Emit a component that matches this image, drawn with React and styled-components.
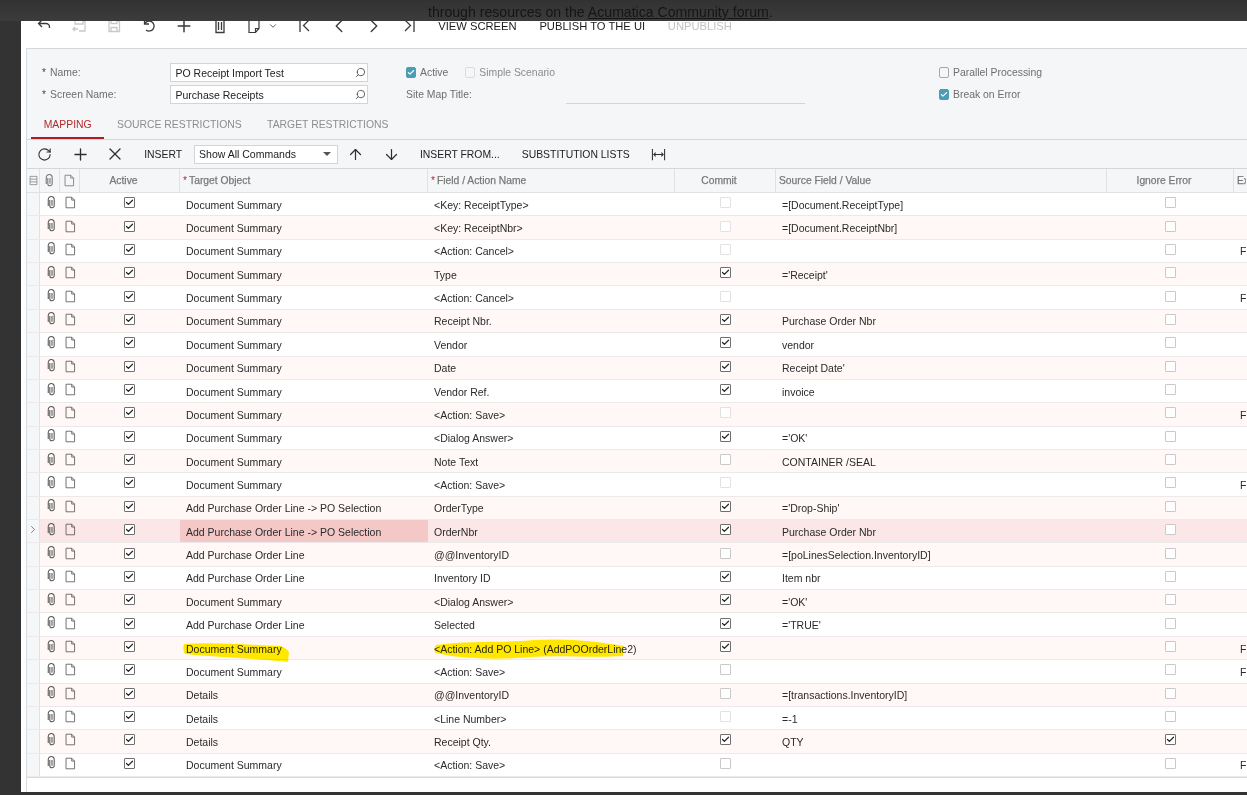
import styled, { createGlobalStyle } from "styled-components";
import {
  Plus,
  X,
  RotateCw,
  ArrowUp,
  ArrowDown,
  ChevronLeft,
  ChevronRight,
  ChevronDown,
  Search,
  Check,
} from "lucide-react";

const GlobalStyle = createGlobalStyle`
  html, body {
    margin: 0;
    padding: 0;
    height: 795px;
    overflow: hidden;
    background: #333333;
    font-family: "Liberation Sans", Arial, sans-serif;
    color: #2b2b2b;
  }
  * { box-sizing: border-box; }
`;

const Page = styled.div`
  width: 1247px;
  height: 795px;
  display: flex;
  flex-direction: column;
  overflow: hidden;
  background: #333333;
`;
const Behind = styled.div`
  height: 21px;
  flex: none;
  overflow: hidden;
  padding-left: 428px;
  padding-top: 4px;
  font-size: 14.1px;
  line-height: 17px;
  color: #151515;
  background: linear-gradient(#323232, #3c3c3c);
  a {
    color: #151515;
    text-decoration: underline;
  }
`;
const Window = styled.div`
  margin-left: 21px;
  height: 771px;
  flex: none;
  background: #ffffff;
  padding-left: 5px;
  overflow: hidden;
`;

const Toolbar = styled.div`
  height: 27px;
  display: flex;
  align-items: flex-start;
  overflow: hidden;
`;
const ToolIcon = styled.div`
  width: ${(p) => p.$w || 35.2}px;
  height: 9px;
  flex: none;
  display: flex;
  align-items: center;
  justify-content: center;
  gap: 6px;
  color: ${(p) => (p.$off ? "#c9c9c9" : "#3a3a3a")};
`;
const ToolText = styled.div`
  height: 11px;
  line-height: 11px;
  padding: 0 11.4px;
  font-size: 11.2px;
  white-space: nowrap;
  color: ${(p) => (p.$off ? "#c4c4c4" : "#1c1c1c")};
`;

const Main = styled.div`
  border-left: 1px solid #d9dcdf;
  height: 744px;
  overflow: hidden;
`;
const Summary = styled.div`
  height: 91px;
  background: #f4f6f8;
  border-top: 1px solid #d5d8da;
`;
const Form = styled.div`
  display: grid;
  grid-template-columns: 128px 198px 38px 533px 1fr;
  grid-template-rows: 19px 19px;
  row-gap: 3px;
  padding: 14px 0 0 15px;
  height: 65px;
  font-size: 10.4px;
  color: #6e6e6e;
  align-items: center;
`;
const Label = styled.div`
  display: flex;
  align-items: center;
  gap: 3px;
  padding-bottom: 1px;
  &::before {
    content: "*";
    color: #444;
    font-size: 10px;
    width: 5px;
  }
`;
const Lookup = styled.div`
  height: 19px;
  background: #ffffff;
  border: 1px solid #d2d5d8;
  display: flex;
  align-items: center;
  justify-content: space-between;
  padding: 0 1px 0 4.500px;
  font-size: 10.5px;
  color: #222;
`;
const CheckRow = styled.div`
  display: flex;
  align-items: center;
  gap: 4px;
  color: ${(p) => (p.$dim ? "#8c8c8c" : "#6e6e6e")};
`;
const MidRow = styled.div`
  display: flex;
  align-items: center;
  gap: 17px;
`;
const SiteRow = styled.div`
  display: flex;
  align-items: center;
  span {
    width: 160px;
    padding-bottom: 1px;
  }
  div {
    width: 239px;
    height: 19px;
    border-bottom: 1px solid #d2d5d8;
  }
`;
const FormBox = styled.span`
  width: 10px;
  height: 11px;
  border-radius: 2px;
  flex: none;
  display: flex;
  align-items: center;
  justify-content: center;
  color: #fff;
  background: ${(p) => (p.$on ? "#4b9db3" : "transparent")};
  border: 1px solid ${(p) => (p.$on ? "#4b9db3" : p.$dim ? "#dcdcdc" : "#a8a8a8")};
`;
const Tabs = styled.div`
  display: flex;
  height: 25px;
  padding-left: 4px;
`;
const Tab = styled.div`
  padding: 0 12.700px;
  height: 25px;
  line-height: 22px;
  font-size: 10.4px;
  color: ${(p) => (p.$on ? "#b3282d" : "#8d8d8d")};
  border-bottom: 2px solid ${(p) => (p.$on ? "#b01c22" : "transparent")};
`;

const GridBar = styled.div`
  height: 30px;
  background: #f4f6f8;
  border-top: 1px solid #d5d8da;
  border-bottom: 1px solid #d5d8da;
  display: flex;
  align-items: center;
`;
const BarIcon = styled.div`
  width: 35.4px;
  flex: none;
  display: flex;
  justify-content: center;
  color: #2e2e2e;
`;
const BarText = styled.div`
  padding: 0 11px;
  font-size: 10.4px;
  white-space: nowrap;
  color: #222;
`;
const Select = styled.div`
  width: 144px;
  height: 19px;
  margin-left: 1px;
  background: #fff;
  border: 1px solid #d2d5d8;
  display: flex;
  align-items: center;
  justify-content: space-between;
  padding: 0 6px 0 4px;
  font-size: 10.5px;
  color: #222;
  &::after {
    content: "";
    border-left: 4px solid transparent;
    border-right: 4px solid transparent;
    border-top: 4px solid #555;
  }
`;

const cols = "13px 20px 20px 100px 248px 247px 101px 331px 127px 1fr";
const HeadRow = styled.div`
  display: grid;
  grid-template-columns: ${cols};
  height: 24px;
  background: #f4f6f8;
  border-bottom: 1px solid #dfe1e3;
`;
const HeadCell = styled.div`
  display: flex;
  align-items: center;
  justify-content: ${(p) => (p.$center ? "center" : "flex-start")};
  padding-left: ${(p) => (p.$center ? 0 : 3)}px;
  padding-right: ${(p) => (p.$shift ? 12 : 0)}px;
  border-right: 1px solid ${(p) => (p.$plain ? "transparent" : "#dfe1e3")};
  font-size: 10.3px;
  -webkit-text-stroke: 0.25px #808080;
  color: #747474;
  white-space: nowrap;
  overflow: hidden;
  i {
    font-style: normal;
    color: #c0272d;
    -webkit-text-stroke: 0;
    margin-right: 2px;
  }
`;
const GridBody = styled.div`
  position: relative;
  border-bottom: 1px solid #d8d8d8;
`;
const Row = styled.div`
  display: grid;
  grid-template-columns: ${cols};
  height: 23.36px;
  background: ${(p) => (p.$sel ? "#fbe7e7" : p.$alt ? "#fff8f7" : "#ffffff")};
  border-bottom: 1px solid #ebe9e9;
`;
const Gutter = styled.div`
  background: #f4f6f8;
  border-right: 1px solid #dfe1e3;
  display: flex;
  align-items: center;
  justify-content: center;
  padding-bottom: 3px;
  color: #666;
`;
const IconCell = styled.div`
  display: flex;
  align-items: center;
  justify-content: center;
  padding: 0 0 3px ${(p) => p.$nudge || 0}px;
  color: #555;
`;
const TextCell = styled.div`
  display: flex;
  align-items: center;
  padding-left: 6px;
  padding-top: 1px;
  font-size: 10.5px;
  color: #2a2a2a;
  white-space: nowrap;
  overflow: hidden;
  background: ${(p) => (p.$sel ? "#f5c8c8" : "transparent")};
`;
const BoxCell = styled.div`
  display: flex;
  align-items: center;
  justify-content: center;
  padding-bottom: 3px;
  padding-right: ${(p) => p.$nudge || 0}px;
`;
const GridBox = styled.span`
  width: 11px;
  height: 11px;
  border-radius: 1px;
  display: flex;
  align-items: center;
  justify-content: center;
  background: #fff;
  color: #222;
  border: 1.5px solid ${(p) => (p.$on ? "#6f6f6f" : p.$faint ? "#e2e2e2" : "#c9c9c9")};
`;
const Marker = styled.svg`
  position: absolute;
  left: 0;
  top: 0;
  width: 100%;
  height: 100%;
  pointer-events: none;
  mix-blend-mode: multiply;
`;

const rows = [
  ["Document Summary", "<Key: ReceiptType>", 0, "=[Document.ReceiptType]", 0, ""],
  ["Document Summary", "<Key: ReceiptNbr>", 0, "=[Document.ReceiptNbr]", 0, ""],
  ["Document Summary", "<Action: Cancel>", 0, "", 0, "F"],
  ["Document Summary", "Type", 1, "='Receipt'", 0, ""],
  ["Document Summary", "<Action: Cancel>", 0, "", 0, "F"],
  ["Document Summary", "Receipt Nbr.", 1, "Purchase Order Nbr", 0, ""],
  ["Document Summary", "Vendor", 1, "vendor", 0, ""],
  ["Document Summary", "Date", 1, "Receipt Date'", 0, ""],
  ["Document Summary", "Vendor Ref.", 1, "invoice", 0, ""],
  ["Document Summary", "<Action: Save>", 0, "", 0, "F"],
  ["Document Summary", "<Dialog Answer>", 1, "='OK'", 0, ""],
  ["Document Summary", "Note Text", 2, "CONTAINER /SEAL", 0, ""],
  ["Document Summary", "<Action: Save>", 0, "", 0, "F"],
  ["Add Purchase Order Line -> PO Selection", "OrderType", 1, "='Drop-Ship'", 0, ""],
  ["Add Purchase Order Line -> PO Selection", "OrderNbr", 1, "Purchase Order Nbr", 0, ""],
  ["Add Purchase Order Line", "@@InventoryID", 2, "=[poLinesSelection.InventoryID]", 0, ""],
  ["Add Purchase Order Line", "Inventory ID", 1, "Item nbr", 0, ""],
  ["Document Summary", "<Dialog Answer>", 1, "='OK'", 0, ""],
  ["Add Purchase Order Line", "Selected", 1, "='TRUE'", 0, ""],
  ["Document Summary", "<Action: Add PO Line> (AddPOOrderLine2)", 1, "", 0, "F"],
  ["Document Summary", "<Action: Save>", 2, "", 0, "F"],
  ["Details", "@@InventoryID", 2, "=[transactions.InventoryID]", 0, ""],
  ["Details", "<Line Number>", 0, "=-1", 0, ""],
  ["Details", "Receipt Qty.", 1, "QTY", 1, ""],
  ["Document Summary", "<Action: Save>", 2, "", 0, "F"],
];

const Glyph = ({ size = 16, children, sw = 1.3 }) => (
  <svg width={size} height={size} viewBox="0 0 16 16" fill="none" stroke="currentColor" strokeWidth={sw}>
    {children}
  </svg>
);
const Clip = () => (
  <Glyph size={14} sw={1.2}>
    <path d="M5.500 4.500v6.500a2.500 2.500 0 0 0 5 0V4a3.400 3.400 0 0 0-6.800 0v7.500M8 4.500v6.500" />
  </Glyph>
);
const Sheet = () => (
  <Glyph size={13} sw={1}>
    <path d="M2.500 1.500h7l3.500 3.500v9.500H2.500zM9.500 1.500V5H13" />
  </Glyph>
);

const CheckMark = ({ size = 9 }) => <Check size={size} strokeWidth={3.2} />;

const App = () => {
  return (
    <Page>
      <GlobalStyle />
      <Behind>
        through resources on the <a>Acumatica Community forum</a>.
      </Behind>
      <Window>
        <Toolbar>
          <ToolIcon>
            <Glyph>
              <path d="M6 2 2.500 5.500 6 9M3 5.500h7a3.500 3.500 0 0 1 3.500 3.500v1" />
            </Glyph>
          </ToolIcon>
          <ToolIcon $off>
            <Glyph>
              <path d="M4 1v5h8V2l2 2v9H8M2 11h5M4 9l-2 2 2 2" />
            </Glyph>
          </ToolIcon>
          <ToolIcon $off>
            <Glyph>
              <path d="M3 1.500h8l2.500 2.500v9.500h-10.500zM5 1.500v4h6v-4M5 13.500v-4h6v4" />
            </Glyph>
          </ToolIcon>
          <ToolIcon>
            <Glyph>
              <path d="M3.500 1.500v4.500h4.500M3.500 6a5 5 0 1 1 1.500 6" />
            </Glyph>
          </ToolIcon>
          <ToolIcon>
            <Plus size={20} strokeWidth={1.8} />
          </ToolIcon>
          <ToolIcon>
            <Glyph>
              <path d="M4 1.500h8v13H4zM6.500 4v8M9.500 4v8M2 1.500h12" />
            </Glyph>
          </ToolIcon>
          <ToolIcon $w={49}>
            <Glyph sw={1.2}>
              <path d="M3 1.500h10v9l-3.500 4H3zM13 10.500H9.500v4" />
            </Glyph>
            <ChevronDown size={10} strokeWidth={2} />
          </ToolIcon>
          <ToolIcon>
            <Glyph>
              <path d="M4 1v13M13 2 7.500 7.500 13 13" />
            </Glyph>
          </ToolIcon>
          <ToolIcon>
            <ChevronLeft size={22} strokeWidth={1.5} />
          </ToolIcon>
          <ToolIcon>
            <ChevronRight size={22} strokeWidth={1.5} />
          </ToolIcon>
          <ToolIcon>
            <Glyph>
              <path d="M4 2l5.500 5.500L4 13M13 1v13" />
            </Glyph>
          </ToolIcon>
          <ToolText>VIEW SCREEN</ToolText>
          <ToolText>PUBLISH TO THE UI</ToolText>
          <ToolText $off>UNPUBLISH</ToolText>
        </Toolbar>
        <Main>
          <Summary>
            <Form>
              <Label>Name:</Label>
              <Lookup>
                PO Receipt Import Test
                <Search size={11} color="#555" style={{ transform: "scaleX(-1)" }} />
              </Lookup>
              <span />
              <MidRow>
                <CheckRow>
                  <FormBox $on>
                    <CheckMark />
                  </FormBox>
                  Active
                </CheckRow>
                <CheckRow $dim>
                  <FormBox $dim />
                  Simple Scenario
                </CheckRow>
              </MidRow>
              <CheckRow>
                <FormBox />
                Parallel Processing
              </CheckRow>
              <Label>Screen Name:</Label>
              <Lookup>
                Purchase Receipts
                <Search size={11} color="#555" style={{ transform: "scaleX(-1)" }} />
              </Lookup>
              <span />
              <SiteRow>
                <span>Site Map Title:</span>
                <div />
              </SiteRow>
              <CheckRow>
                <FormBox $on>
                  <CheckMark />
                </FormBox>
                Break on Error
              </CheckRow>
            </Form>
            <Tabs>
              <Tab $on>MAPPING</Tab>
              <Tab>SOURCE RESTRICTIONS</Tab>
              <Tab>TARGET RESTRICTIONS</Tab>
            </Tabs>
          </Summary>
          <GridBar>
            <BarIcon>
              <RotateCw size={15} strokeWidth={1.7} />
            </BarIcon>
            <BarIcon>
              <Plus size={19} strokeWidth={1.7} />
            </BarIcon>
            <BarIcon>
              <X size={20} strokeWidth={1.5} />
            </BarIcon>
            <BarText>INSERT</BarText>
            <Select>Show All Commands</Select>
            <BarIcon>
              <ArrowUp size={17} strokeWidth={1.7} />
            </BarIcon>
            <BarIcon>
              <ArrowDown size={17} strokeWidth={1.7} />
            </BarIcon>
            <BarText>INSERT FROM...</BarText>
            <BarText>SUBSTITUTION LISTS</BarText>
            <BarIcon>
              <Glyph size={15} sw={1.1}>
                <path d="M1.500 2v12M14.500 2v12M3 8h10M5 6 3 8l2 2M11 6l2 2-2 2" />
              </Glyph>
            </BarIcon>
          </GridBar>
          <HeadRow>
            <HeadCell $center>
              <Glyph size={11} sw={1}>
                <path d="M3 2h10v12H3zM3 6h10M3 10h10" />
              </Glyph>
            </HeadCell>
            <HeadCell $center>
              <Clip />
            </HeadCell>
            <HeadCell $center>
              <Sheet />
            </HeadCell>
            <HeadCell $center $shift>
              Active
            </HeadCell>
            <HeadCell>
              <i>*</i>Target Object
            </HeadCell>
            <HeadCell>
              <i>*</i>Field / Action Name
            </HeadCell>
            <HeadCell $center $shift>
              Commit
            </HeadCell>
            <HeadCell>Source Field / Value</HeadCell>
            <HeadCell $center $shift>
              Ignore Error
            </HeadCell>
            <HeadCell $plain>Ex</HeadCell>
          </HeadRow>
          <GridBody>
            {rows.map(([target, field, commit, source, ignore, ex], i) => (
              <Row key={i} $alt={i % 2 === 1} $sel={i === 14}>
                <Gutter>{i === 14 && <ChevronRight size={17} strokeWidth={1.6} />}</Gutter>
                <IconCell $nudge={4}>
                  <Clip />
                </IconCell>
                <IconCell>
                  <Sheet />
                </IconCell>
                <BoxCell $nudge={2}>
                  <GridBox $on>
                    <CheckMark />
                  </GridBox>
                </BoxCell>
                <TextCell $sel={i === 14}>{target}</TextCell>
                <TextCell>{field}</TextCell>
                <BoxCell>
                  <GridBox $on={commit === 1} $faint={commit === 0}>
                    {commit === 1 && <CheckMark />}
                  </GridBox>
                </BoxCell>
                <TextCell>{source}</TextCell>
                <BoxCell>
                  <GridBox $on={ignore === 1}>{ignore === 1 && <CheckMark />}</GridBox>
                </BoxCell>
                <TextCell>{ex}</TextCell>
              </Row>
            ))}
            <Marker>
              <g transform="translate(-27,-193)" fill="#ffee00">
                <path d="M184 644C215 642 250 645 281 646C285 648 288 650 289 652L288 662C262 659 215 657 185 654C183 651 183 647 184 644Z" />
                <path d="M436 645C470 640 505 643 535 640C570 638 600 642 624 646L623 656C595 658 560 655 530 657C500 660 460 659 436 653C434 651 434 648 436 645Z" />
              </g>
            </Marker>
          </GridBody>
        </Main>
      </Window>
    </Page>
  );
};

export default App;
